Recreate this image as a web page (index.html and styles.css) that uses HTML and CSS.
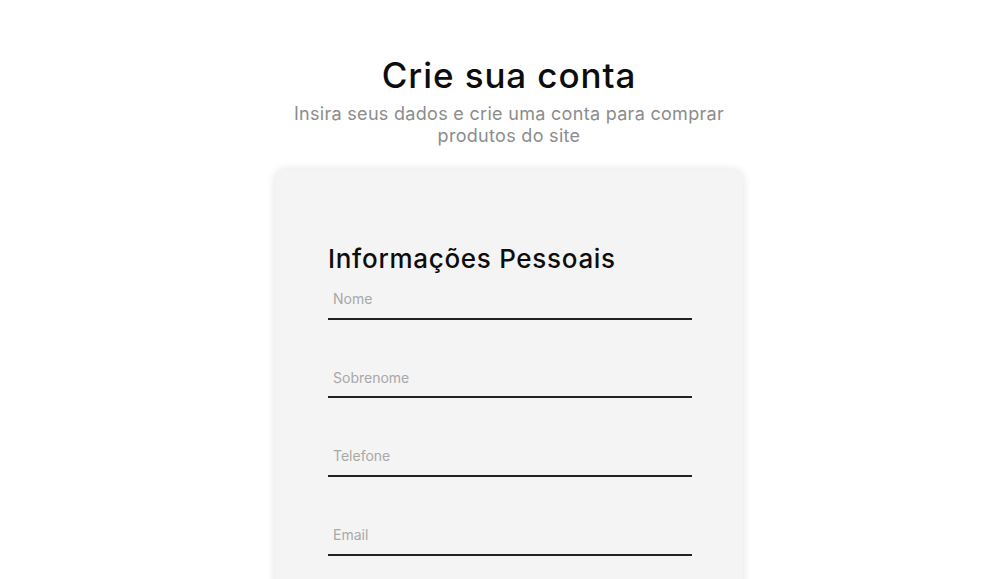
FILE: index.html
```html
<!DOCTYPE html>
<html lang="pt-BR">
<head>
<meta charset="utf-8">
<title>Crie sua conta</title>
<link rel="stylesheet" href="styles.css">
</head>
<body>
<main class="page">
  <header class="intro">
    <h1 class="title">Crie sua conta</h1>
    <p class="subtitle">Insira seus dados e crie uma conta para comprar produtos do site</p>
  </header>
  <section class="card">
    <h2 class="section-title">Informações Pessoais</h2>
    <form class="fields">
      <input class="field" type="text" placeholder="Nome">
      <input class="field" type="text" placeholder="Sobrenome">
      <input class="field" type="tel" placeholder="Telefone">
      <input class="field" type="email" placeholder="Email">
    </form>
  </section>
</main>
</body>
</html>
```
FILE: styles.css
```css
html, body {
  margin: 0;
  padding: 0;
  background: #ffffff;
  font-family: Inter, "Noto Sans", sans-serif;
  overflow: hidden;
}

.page {
  display: flex;
  flex-direction: column;
  align-items: center;
  padding: 57px 0 0 36px;
  height: 579px;
  box-sizing: border-box;
}

.intro {
  display: flex;
  flex-direction: column;
  align-items: center;
  text-align: center;
}

.title {
  margin: 0;
  font-size: 35px;
  font-weight: 500;
  line-height: 36px;
  color: #0d0d0d;
  letter-spacing: 0.9px;
}

.subtitle {
  margin: 10px 0 0;
  width: 450px;
  font-size: 18px;
  line-height: 22px;
  color: #8c8c8c;
  letter-spacing: 0.3px;
}

.card {
  margin-top: 23px;
  width: 468px;
  box-sizing: border-box;
  padding: 73px 51px 40px 53px;
  background: #f4f4f4;
  border-radius: 10px;
  box-shadow: 0 0 10px rgba(0, 0, 0, 0.12);
  flex: none;
}

.section-title {
  margin: 0;
  font-size: 26px;
  font-weight: 500;
  line-height: 32px;
  color: #0d0d0d;
  letter-spacing: 0.7px;
}

.fields {
  margin-top: 14.5px;
  display: flex;
  flex-direction: column;
  gap: 48.7px;
}

.field {
  display: block;
  width: 364px;
  box-sizing: border-box;
  height: 30px;
  padding: 0 5px 10px;
  border: none;
  border-bottom: 2px solid #222;
  background: transparent;
  font-family: Inter, "Noto Sans", sans-serif;
  font-size: 14px;
  color: #333;
  outline: none;
}

.field::placeholder {
  color: #a8a8a8;
}
```
